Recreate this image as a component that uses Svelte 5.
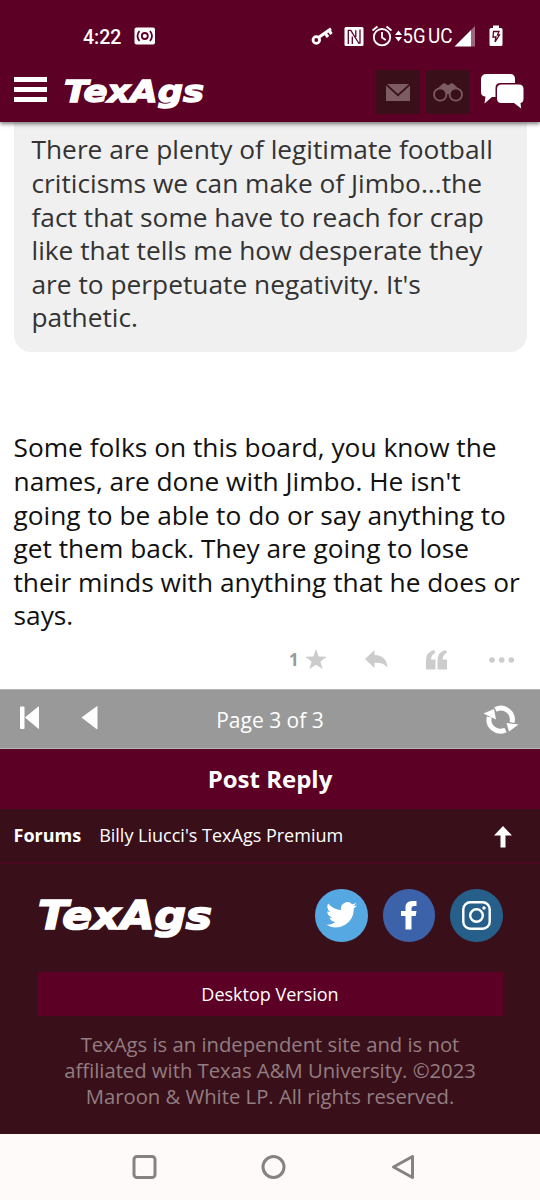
<script lang="ts">
	const quoteLines = [
		'There are plenty of legitimate football',
		'criticisms we can make of Jimbo...the',
		'fact that some have to reach for crap',
		'like that tells me how desperate they',
		"are to perpetuate negativity. It's",
		'pathetic.'
	];

	const postLines = [
		'Some folks on this board, you know the',
		"names, are done with Jimbo. He isn't",
		'going to be able to do or say anything to',
		'get them back. They are going to lose',
		'their minds with anything that he does or',
		'says.'
	];

	const legalLines = [
		'TexAgs is an independent site and is not',
		'affiliated with Texas A&M University. ©2023',
		'Maroon & White LP. All rights reserved.'
	];

	let stars = $state(1);
</script>

{#snippet logo()}
	<svg class="logo" viewBox="0 0 140 32" aria-label="TexAgs">
		<text x="0" y="24.5" textLength="140" lengthAdjust="spacingAndGlyphs">TexAgs</text>
	</svg>
{/snippet}

<div class="screen">
	<header>
		<div class="status">
			<span class="clock">4:22</span>
			<svg class="cast" width="22" height="18" viewBox="0 0 22 18">
				<rect x="0.5" y="0.5" width="20.5" height="17" rx="2" fill="#fff" />
				<g fill="none" stroke="#5c0025" stroke-width="1.8">
					<circle cx="10.8" cy="9" r="3" />
					<path d="M5.5 4Q1.5 9 5.5 14M16 4q4 5 0 10" />
				</g>
			</svg>
			<svg class="indicators" width="200" height="26" viewBox="310 23 200 26" fill="#fff">
				<g fill="none" stroke="#fff">
					<circle cx="316.3" cy="40" r="3.3" stroke-width="2.8" />
					<path d="M318.5 37.6 331 28.8M325 33l3 4M328.5 30l3 4" stroke-width="3" />
				</g>
				<rect x="344.5" y="27" width="19" height="19" rx="1.5" />
				<path
					d="M348.3 44V30.3h2.500L358.300 42.500M352.300 44V36.500M355.800 30.300V37M360 29.500V43h-2"
					fill="none"
					stroke="#5c0025"
					stroke-width="1.3"
				/>
				<g fill="none" stroke="#fff" stroke-width="1.8">
					<circle cx="382" cy="37.2" r="8.2" />
					<path d="M382 32v5.6l3.7 2.5M372.5 30.5l5-4M391.5 30.5l-5-4" />
				</g>
				<path d="M395 35l3.500-4.500 3.500 4.500zM395 37l3.500 4.500 3.500-4.500z" />
				<text x="402.500" y="43" textLength="23" lengthAdjust="spacingAndGlyphs">5G</text>
				<text x="428" y="43" textLength="24.500" lengthAdjust="spacingAndGlyphs">UC</text>
				<path d="M454.500 46.500 471 30v16.500z" />
				<path d="M471 30l4-4v20.500h-4z" opacity=".4" />
				<path d="M493 25.500h6V28h2q1.500 0 1.500 1.500v15q0 1.500-1.500 1.500h-10q-1.500 0-1.500-1.500v-15q0-1.500 1.500-1.500h2z" />
				<path
					d="M493.500 31.500h5.500l-1.500 3.500h2l-4.500 7 1-5h-3z"
					fill="none"
					stroke="#5c0025"
					stroke-width="1.3"
				/>
			</svg>
		</div>
		<div class="topnav">
			<button class="menu" aria-label="Menu"><i></i><i></i><i></i></button>
			<div class="brand">{@render logo()}</div>
			<button class="tile" aria-label="Messages">
				<svg width="24" height="17" viewBox="0 0 24 17" fill="#7d5b62">
					<path d="M0 1.500V17h24V1.500L12 12.500zM1 0h22L12 10z" />
				</svg>
			</button>
			<button class="tile" aria-label="Watched">
				<svg width="30" height="19" viewBox="0 0 30 19">
					<path d="M3 7 9.500 1q2-1.500 4 .5 1.500 1 3 0 2-2 4-.5L27 7l-8 4h-8z" fill="#7d5b62" />
					<g fill="#39101a" stroke="#7d5b62" stroke-width="1.800">
						<circle cx="7.200" cy="11.500" r="6.200" />
						<circle cx="22.800" cy="11.500" r="6.200" />
					</g>
				</svg>
			</button>
			<button class="chat" aria-label="Forums">
				<svg width="44" height="36" viewBox="0 0 44 36" fill="#fff">
					<path
						d="M6.500 0h23.500q5 0 5 5v4H20.500q-5 0-5 5v9h-3.500L4.500 29.500l1-7q-4.500 0-4.500-5v-12Q1 0 6.500 0z"
					/>
					<path d="M21.500 10.500h17.500q4.500 0 4.500 4.500v9.500q0 4-3 4.500l.7 5.500-7.200-5.500H21.500q-4.500 0-4.500-4.500V15q0-4.500 4.500-4.500z" />
				</svg>
			</button>
		</div>
	</header>

	<main>
		<blockquote>
			{#each quoteLines as line}
				<div>{line}</div>
			{/each}
		</blockquote>
		<div class="post">
			{#each postLines as line}
				<div>{line}</div>
			{/each}
		</div>
		<div class="actions">
			<button class="star" aria-label="Star" onclick={() => (stars += 1)}>
				<span>{stars}</span>
				<svg width="22" height="21" viewBox="0 0 22 21">
					<path d="M11 0l2.700 7.600 8 .2-6.300 4.900L17.700 20 11 15.700 4.300 20l2.300-7.300L.3 7.800l8-.2z" />
				</svg>
			</button>
			<button aria-label="Reply">
				<svg width="23" height="21" viewBox="0 0 23 21">
					<path d="M0 10 9.500 1v5C18 6 22 11 22.500 18.500 18.500 14 15 13.500 9.500 13.700V19z" />
				</svg>
			</button>
			<button aria-label="Quote">
				<svg width="22" height="20" viewBox="0 0 22 20">
					<path
						d="M0 19.500V10.500Q0 2 8 0l1.500 2.500Q5 5 5 9.500h4.500v10zM11.500 19.500V10.500q0-8.500 8-10.500L21 2.500q-4.500 2.500-4.500 7H21v10z"
					/>
				</svg>
			</button>
			<button aria-label="More">
				<svg width="26" height="6" viewBox="0 0 26 6">
					<circle cx="3" cy="3" r="2.800" />
					<circle cx="12.700" cy="3" r="2.800" />
					<circle cx="22.300" cy="3" r="2.800" />
				</svg>
			</button>
		</div>
	</main>

	<nav class="pager">
		<svg class="first" width="20" height="24" viewBox="0 0 20 24" fill="#fff">
			<rect width="4.500" height="22.500" y=".5" rx="1" />
			<path d="M5 11.500 18 .7q1-.7 1 .5v21q0 1-1 .4z" />
		</svg>
		<svg class="prev" width="18" height="24" viewBox="0 0 18 24" fill="#fff">
			<path d="M.5 11.500 15.500.5q1-.5 1 .5v21.500q0 1-1 .5z" />
		</svg>
		<span>Page 3 of 3</span>
		<svg class="refresh" width="36" height="30" viewBox="0 0 36 30" fill="none" stroke="#fff">
			<path
				d="M6.300 12A11.500 11.500 0 0 0 22.500 25M12.500 4.500A11.500 11.500 0 0 1 29 17.500"
				stroke-width="5"
			/>
			<path d="M.5 8.500 11 4 13 14.500zM23.500 18 35.500 19.500 26 26.500z" fill="#fff" stroke="none" />
		</svg>
	</nav>
	<button class="reply">Post Reply</button>
	<div class="crumbs">
		<b>Forums</b>
		<span>Billy Liucci's TexAgs Premium</span>
		<svg width="18" height="22" viewBox="0 0 18 22" fill="#fff">
			<path d="M9 0l9 9.500h-6.500v12h-5v-12H0z" />
		</svg>
	</div>

	<footer>
		<div class="footer-top">
			<div class="brand">{@render logo()}</div>
			<div class="social">
				<span class="twitter">
					<svg width="31" height="26" viewBox="0 0 24 20" fill="#fff">
						<path
							d="M24 2.400a10 10 0 0 1-2.800.8A4.900 4.900 0 0 0 23.300.5a10 10 0 0 1-3.100 1.200 4.900 4.900 0 0 0-8.400 4.500A14 14 0 0 1 1.700 1.100a4.900 4.900 0 0 0 1.500 6.500A5 5 0 0 1 1 7a4.900 4.900 0 0 0 3.900 4.900 5 5 0 0 1-2.200.1 4.900 4.900 0 0 0 4.600 3.400A10 10 0 0 1 0 17.400 14 14 0 0 0 21.500 5a10 10 0 0 0 2.500-2.600z"
						/>
					</svg>
				</span>
				<span class="facebook">
					<svg width="16" height="30" viewBox="0 0 16 30" fill="#fff">
						<path d="M4.500 29.500V16H0v-5h4.500V7.500Q4.500 1 11 1h4.500v5H13q-2.500 0-2.500 2.500V11h5l-.8 5h-4.200v13.500z" />
					</svg>
				</span>
				<span class="instagram">
					<svg width="29" height="29" viewBox="0 0 29 29" fill="none" stroke="#fff" stroke-width="2.400">
						<rect x="1.300" y="1.300" width="26.400" height="26.400" rx="7" />
						<circle cx="14.500" cy="14.500" r="6.300" />
						<circle cx="22" cy="7" r="1.700" fill="#fff" stroke="none" />
					</svg>
				</span>
			</div>
		</div>
		<button class="desktop">Desktop Version</button>
		<div class="legal">
			{#each legalLines as line}
				<div>{line}</div>
			{/each}
		</div>
	</footer>

	<div class="system">
		<svg width="540" height="66" viewBox="0 1134 540 66" fill="none" stroke="#858382" stroke-width="3">
			<rect x="134" y="1156.500" width="21" height="21" rx="3" />
			<circle cx="273.500" cy="1167" r="10.500" />
			<path d="M393.500 1167 412.500 1156.500v21z" stroke-linejoin="round" />
		</svg>
	</div>
</div>

<style>
	:global(body) {
		margin: 0;
		background: #fff;
	}

	.screen {
		width: 540px;
		height: 1200px;
		overflow: hidden;
		display: flex;
		flex-direction: column;
		font-family: 'Open Sans', 'Noto Sans', sans-serif;
		color: #fff;
	}

	svg {
		display: block;
		flex: none;
	}

	button {
		font-family: inherit;
		color: inherit;
		border: none;
		background: none;
		padding: 0;
		margin: 0;
	}

	header {
		position: relative;
		height: 122px;
		flex: none;
		background: #5c0025;
		box-shadow: 0 2px 4px rgba(0, 0, 0, 0.5);
	}

	.status {
		height: 62px;
		box-sizing: border-box;
		padding: 10px 30px 0 83px;
		display: flex;
		align-items: center;
	}

	.clock {
		width: 51px;
		padding-top: 2px;
		font: 500 19.5px Roboto, sans-serif;
	}

	.indicators {
		margin-left: auto;
	}

	.indicators text {
		font: 20.5px Roboto, sans-serif;
	}

	.topnav {
		height: 60px;
		padding: 0 16px 0 13.5px;
		display: flex;
		align-items: center;
	}

	.menu {
		width: 33px;
		margin: -6px 17.5px 0 0;
		display: flex;
		flex-direction: column;
		gap: 5px;
	}

	.menu i {
		height: 5px;
		background: #fff;
	}

	.brand {
		width: 140px;
	}

	.logo {
		width: 100%;
		overflow: visible;
	}

	.logo text {
		font: italic bold 31px 'DejaVu Sans', sans-serif;
		fill: #fff;
		stroke: #fff;
		stroke-width: 1.4px;
	}

	.tile {
		width: 44px;
		height: 44px;
		margin-right: 6px;
		display: flex;
		align-items: center;
		justify-content: center;
		background: #39101a;
		border-radius: 2px;
	}

	.topnav .brand {
		margin: 2px auto 0 0;
	}

	.chat {
		margin-left: 4px;
	}

	main {
		height: 567px;
		flex: none;
		font-size: 26.3px;
		line-height: 33.6px;
		white-space: nowrap;
		color: #111;
	}

	blockquote {
		margin: 0 13.5px;
		padding: 11.4px 18px 16.6px;
		border-radius: 0 0 17px 17px;
		background: #f0f0f0;
		color: #333;
	}

	.post {
		padding: 79.9px 13.5px 0;
	}

	.actions {
		display: flex;
		align-items: center;
		height: 53.5px;
		padding: 0 25px 0 289px;
	}

	.actions svg {
		fill: #ccc;
	}

	.actions button {
		margin-right: 38px;
	}

	.actions button:last-child {
		margin: 0 0 0 3px;
	}

	.star {
		display: flex;
		align-items: center;
		gap: 6px;
		font-size: 17px;
		font-weight: 700;
		color: #999;
	}

	.pager {
		height: 60px;
		box-sizing: border-box;
		flex: none;
		display: grid;
		grid-template-columns: 61px 99px 180px 1fr;
		align-items: center;
		padding: 0 20px;
		border-top: 1px solid #b4b4b4;
		border-bottom: 1px solid #b4b4b4;
		background: #999;
		font-size: 21px;
		text-align: center;
	}

	.pager span {
		padding-top: 1px;
	}

	.first,
	.prev {
		margin-top: -3px;
	}

	.refresh {
		justify-self: end;
		margin: 1px 1px 0 0;
	}

	.reply {
		height: 60px;
		padding-bottom: 2px;
		flex: none;
		background: #5c0025;
		font-size: 24px;
		font-weight: 700;
	}

	.crumbs {
		height: 55px;
		box-sizing: border-box;
		flex: none;
		display: flex;
		align-items: center;
		gap: 18px;
		padding: 0 28px 2px 13.5px;
		background: #39101a;
		border-bottom: 2px solid #4d0821;
		font-size: 18px;
	}

	.crumbs svg {
		margin: 4px 0 0 auto;
	}

	footer {
		flex: 1;
		padding: 25px 37.5px 0;
		background: #39101a;
	}

	.footer-top,
	.social {
		display: flex;
		justify-content: space-between;
		align-items: center;
	}

	footer .brand {
		width: 174px;
		padding-top: 8px;
	}

	.social {
		gap: 15px;
	}

	.social span {
		width: 52.5px;
		height: 52.5px;
		border-radius: 50%;
		display: flex;
		align-items: center;
		justify-content: center;
	}

	.twitter {
		background: #55a8e2;
	}

	.facebook {
		background: #3c62aa;
	}

	.instagram {
		background: #275f8b;
	}

	.desktop {
		display: block;
		width: 100%;
		height: 44px;
		margin: 30px 0 15.5px;
		background: #5c0025;
		font-size: 18px;
	}

	.legal {
		color: #937d81;
		font-size: 20.25px;
		line-height: 26.2px;
		text-align: center;
		white-space: nowrap;
	}

	.system {
		height: 66px;
		flex: none;
		background: #fefaf9;
	}
</style>
